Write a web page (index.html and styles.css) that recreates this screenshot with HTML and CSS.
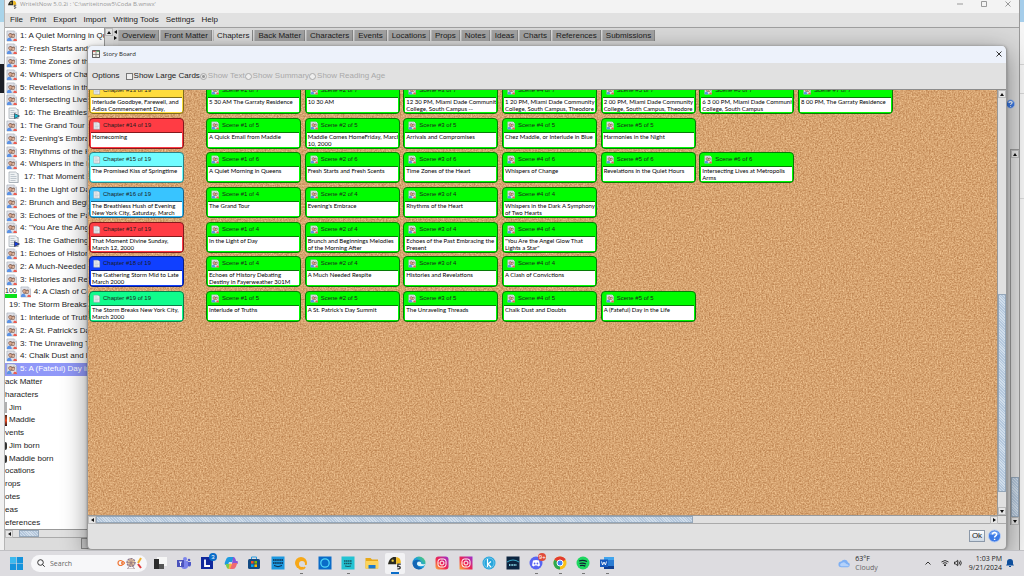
FILE: index.html
```html
<!DOCTYPE html>
<html lang="en">
<head>
<meta charset="utf-8">
<title>WriteItNow - Story Board</title>
<link rel="stylesheet" href="styles.css">
</head>
<body>
<svg class="defs" aria-hidden="true">
  <defs>
    <filter id="cork" x="0" y="0" width="100%" height="100%" color-interpolation-filters="sRGB">
      <feTurbulence type="fractalNoise" baseFrequency="0.65" numOctaves="2" seed="4"/>
      <feColorMatrix values="0.32 0 0 0 0.68  0.40 0 0 0 0.44  0.40 0 0 0 0.24  0 0 0 0 1"/>
    </filter>
    <linearGradient id="ig" x1="0" y1="1" x2="1" y2="0"><stop offset="0" stop-color="#fdb03c"/><stop offset=".45" stop-color="#f0264f"/><stop offset="1" stop-color="#9b2fd0"/></linearGradient>
    <linearGradient id="edge" x1="0" y1="1" x2="1" y2="0"><stop offset="0" stop-color="#0c59a4"/><stop offset=".5" stop-color="#1b9de2"/><stop offset="1" stop-color="#5bd65b"/></linearGradient>
    <symbol id="people" viewBox="0 0 12 12"><path d="M1 .5h8l2.500 2.500v8.500H1z" fill="#dfe1e8" stroke="#9aa2ae" stroke-width=".6"/><path d="M9 .5V3h2.500" fill="#fff" stroke="#9aa2ae" stroke-width=".5"/><path d="M2.500 5.500a2.300 2.300 0 0 1 4.200-1.700A2 2 0 0 1 10 5.500L9 8H4z" fill="#8a6a5c"/><circle cx="4.700" cy="5.400" r="1.500" fill="#d8a890"/><circle cx="8" cy="5.900" r="1.300" fill="#e0b8a0"/><path d="M1 11.500C1 9 2 8 3.500 8s2.700 1 2.700 3.500z" fill="#5a92e6"/><path d="M8 11.500C8 9.500 8.600 9 9.800 9s2.200.8 2.200 2.500z" fill="#ec5c50"/></symbol>
    <symbol id="page" viewBox="0 0 12 12"><path d="M2 2h8.500v10H2z" fill="#8e969e" opacity=".6"/><path d="M1 1h6.500l2.500 2v8.500H1z" fill="#eef1f3" stroke="#8d98a2" stroke-width=".6"/><path d="M2.500 3.500h4M2.500 5.500h6M2.500 7.500h6M2.500 9.500h5" stroke="#aab4bd" stroke-width=".7"/></symbol>
    <symbol id="flag" viewBox="0 0 6 6"><path d="M.5.5 5.500 3 .5 5.500z" stroke="#223" stroke-width=".6"/></symbol>
    <symbol id="help" viewBox="0 0 14 14"><circle cx="7" cy="7" r="6.500" fill="#3c7ae6" stroke="#b9cdf2"/><path d="M2 5.500a5.300 5.300 0 0 1 10 0z" fill="#86b0f6"/><path d="M4.800 5.400c.1-3 4.600-2.800 4.500-.1 0 1.500-2.200 1.600-2.200 3.200M7.100 10v1.300" fill="none" stroke="#fff" stroke-width="1.600"/></symbol>
    <symbol id="bird" viewBox="0 0 12 12"><path d="M0 7C1 2 4 0 7 1v6z" fill="#2a2a20"/><path d="M7 1c3 0 4 2 4 5L7 7z" fill="#f0b91c"/><circle cx="4" cy="4" r="1" fill="#f0d040"/><path d="M11 7H8.500l-.2 2c3-.6 3 2.500-.3 2" fill="none" stroke="#333" stroke-width="1.100"/></symbol>
  </defs>
</svg>
<div class="desktop">
 <div class="workspace">
  <div class="strip strip-left"></div>
  <div class="strip strip-right"></div>

  <main class="app">
    <header class="app-title">
      <svg class="app-logo"><use href="#bird"/></svg>
      <span>WriteItNow 5.0.2i : 'C:\writeitnow5\Coda B.wnwx'</span>
      <span class="win-buttons">
        <button aria-label="Minimize"><svg viewBox="0 0 6 6"><path d="M0 3h6"/></svg></button>
        <button aria-label="Maximize"><svg viewBox="0 0 6 6"><path d="M.5.5h5v5h-5z"/></svg></button>
        <button aria-label="Close"><svg viewBox="0 0 6 6"><path d="M.5.5l5 5m0-5l-5 5"/></svg></button>
      </span>
    </header>
    <nav class="menu"><button>File</button><button>Print</button><button>Export</button><button>Import</button><button>Writing Tools</button><button>Settings</button><button>Help</button></nav>
    <div class="app-body">
      <section class="sidebar">
        <div class="tree-row">
          <ul class="tree">
            <li class="scene"><svg><use href="#people"/></svg>1: A Quiet Morning in Queens</li>
            <li class="scene"><svg><use href="#people"/></svg>2: Fresh Starts and Fresh Scents</li>
            <li class="scene"><svg><use href="#people"/></svg>3: Time Zones of the Heart</li>
            <li class="scene"><svg><use href="#people"/></svg>4: Whispers of Change</li>
            <li class="scene"><svg><use href="#people"/></svg>5: Revelations in the Quiet</li>
            <li class="scene"><svg><use href="#people"/></svg>6: Intersecting Lives at</li>
            <li class="chapter"><i class="pct"></i><svg><use href="#page"/><use class="cyan" href="#flag" x="6" y="6" width="6" height="6"/></svg>16: The Breathless Hush</li>
            <li class="scene"><svg><use href="#people"/></svg>1: The Grand Tour</li>
            <li class="scene"><svg><use href="#people"/></svg>2: Evening's Embrace</li>
            <li class="scene"><svg><use href="#people"/></svg>3: Rhythms of the Heart</li>
            <li class="scene"><svg><use href="#people"/></svg>4: Whispers in the Dark</li>
            <li class="chapter"><i class="pct"></i><svg><use href="#page"/></svg>17: That Moment Divine</li>
            <li class="scene"><svg><use href="#people"/></svg>1: In the Light of Day</li>
            <li class="scene"><svg><use href="#people"/></svg>2: Brunch and Beginnings</li>
            <li class="scene"><svg><use href="#people"/></svg>3: Echoes of the Past</li>
            <li class="scene"><svg><use href="#people"/></svg>4: "You Are the Angel</li>
            <li class="chapter"><i class="pct"></i><svg><use href="#page"/><use class="blue" href="#flag" x="6" y="6" width="6" height="6"/></svg>18: The Gathering Storm</li>
            <li class="scene"><svg><use href="#people"/></svg>1: Echoes of History</li>
            <li class="scene"><svg><use href="#people"/></svg>2: A Much-Needed Respite</li>
            <li class="scene"><svg><use href="#people"/></svg>3: Histories and Revelations</li>
            <li class="rated"><span class="score">100</span><svg><use href="#people"/></svg>4: A Clash of Convictions</li>
            <li class="root"><i class="dot"></i>19: The Storm Breaks: New</li>
            <li class="scene"><svg><use href="#people"/></svg>1: Interlude of Truths</li>
            <li class="scene"><svg><use href="#people"/></svg>2: A St. Patrick's Day</li>
            <li class="scene"><svg><use href="#people"/></svg>3: The Unraveling Threads</li>
            <li class="scene"><svg><use href="#people"/></svg>4: Chalk Dust and Doubts</li>
            <li class="scene selected"><svg><use href="#people"/></svg>5: A (Fateful) Day in the Life</li>
            <li>ack Matter</li>
            <li>haracters</li>
            <li class="leaf"><i class="thumb-grey"></i>Jim</li>
            <li class="leaf"><i class="thumb-red"></i>Maddie</li>
            <li>vents</li>
            <li class="leaf"><i class="clock"></i>Jim born</li>
            <li class="leaf"><i class="clock"></i>Maddie born</li>
            <li>ocations</li>
            <li>rops</li>
            <li>otes</li>
            <li>eas</li>
            <li>eferences</li>
          </ul>
          <div class="vbar"><button class="arrow up" aria-label="Scroll tree up"></button></div>
        </div>
        <div class="hbar tree-hbar"><button class="arrow left" aria-label="Scroll tree left"></button><span class="thumb"></span></div>
        <div class="side-foot"><button aria-label="Search tree"></button></div>
      </section>
      <div class="divider"><i class="arrow left"></i><i class="arrow right"></i></div>
      <section class="content">
        <nav class="tabs"><button>Overview</button><button>Front Matter</button><button class="on">Chapters</button><button>Back Matter</button><button>Characters</button><button>Events</button><button>Locations</button><button>Props</button><button>Notes</button><button>Ideas</button><button>Charts</button><button>References</button><button>Submissions</button></nav>
        <button class="side-help" aria-label="Help"><svg><use href="#help"/></svg></button>
        <div class="vbar content-vbar"><button class="arrow up" aria-label="Scroll up"></button><span class="track"></span><span class="thumb"></span><button class="arrow down" aria-label="Scroll down"></button></div>
      </section>
    </div>
  </main>

  <section class="dialog" role="dialog" aria-label="Story Board">
    <header class="dialog-title">
      <svg viewBox="0 0 9 9"><path d="M.5.5h8v8h-8z" fill="#f4f4ec" stroke="#444"/><path d="M4.500 0v9M0 5h9" stroke="#666" stroke-width=".8"/><path d="M1 1.500h3" stroke="#d04040"/><path d="M5 1.500h3" stroke="#40a050"/></svg>
      <span>Story Board</span>
      <button class="close" aria-label="Close story board"><svg viewBox="0 0 6 6"><path d="M.5.5l5 5m0-5l-5 5"/></svg></button>
    </header>
    <div class="options">
      <span class="options-label">Options</span>
      <label><input type="checkbox">Show Large Cards</label>
      <label class="off"><input type="radio" name="show" checked disabled>Show Text</label>
      <label class="off"><input type="radio" name="show" disabled>Show Summary</label>
      <label class="off"><input type="radio" name="show" disabled>Show Reading Age</label>
    </div>
    <div class="board-row">
      <div class="board">
        <svg class="cork" aria-hidden="true"><rect width="100%" height="100%" filter="url(#cork)"/></svg>
        <div class="cards">
          <div class="row">
            <article class="card main yellow"><h3><svg><use href="#page"/></svg>Chapter #13 of 19</h3><p>Interlude Goodbye, Farewell, and<br>Adios Commencement Day,</p></article>
            <div class="scenes">
              <article class="card"><h3><svg><use href="#people"/></svg>Scene #1 of 7</h3><p>5 30 AM The Garraty Residence</p></article>
              <article class="card"><h3><svg><use href="#people"/></svg>Scene #2 of 7</h3><p>10 30 AM</p></article>
              <article class="card"><h3><svg><use href="#people"/></svg>Scene #3 of 7</h3><p>12 30 PM, Miami Dade Community<br>College, South Campus --</p></article>
              <article class="card"><h3><svg><use href="#people"/></svg>Scene #4 of 7</h3><p>1 20 PM, Miami Dade Community<br>College, South Campus, Theodore</p></article>
              <article class="card"><h3><svg><use href="#people"/></svg>Scene #5 of 7</h3><p>2 00 PM, Miami Dade Community<br>College, South Campus, Theodore</p></article>
              <article class="card"><h3><svg><use href="#people"/></svg>Scene #6 of 7</h3><p>6 3 00 PM, Miami Dade Community<br>College, South Campus</p></article>
              <article class="card"><h3><svg><use href="#people"/></svg>Scene #7 of 7</h3><p>8 00 PM, The Garraty Residence</p></article>
            </div>
          </div>
          <div class="row">
            <article class="card main red"><h3><svg><use href="#page"/></svg>Chapter #14 of 19</h3><p>Homecoming</p></article>
            <div class="scenes">
              <article class="card"><h3><svg><use href="#people"/></svg>Scene #1 of 5</h3><p>A Quick Email from Maddie</p></article>
              <article class="card"><h3><svg><use href="#people"/></svg>Scene #2 of 5</h3><p>Maddie Comes HomeFriday, March<br>10, 2000</p></article>
              <article class="card"><h3><svg><use href="#people"/></svg>Scene #3 of 5</h3><p>Arrivals and Compromises</p></article>
              <article class="card"><h3><svg><use href="#people"/></svg>Scene #4 of 5</h3><p>Chez Maddie, or Interlude in Blue</p></article>
              <article class="card"><h3><svg><use href="#people"/></svg>Scene #5 of 5</h3><p>Harmonies in the Night</p></article>
            </div>
          </div>
          <div class="row">
            <article class="card main cyan"><h3><svg><use href="#page"/></svg>Chapter #15 of 19</h3><p>The Promised Kiss of Springtime</p></article>
            <div class="scenes">
              <article class="card"><h3><svg><use href="#people"/></svg>Scene #1 of 6</h3><p>A Quiet Morning in Queens</p></article>
              <article class="card"><h3><svg><use href="#people"/></svg>Scene #2 of 6</h3><p>Fresh Starts and Fresh Scents</p></article>
              <article class="card"><h3><svg><use href="#people"/></svg>Scene #3 of 6</h3><p>Time Zones of the Heart</p></article>
              <article class="card"><h3><svg><use href="#people"/></svg>Scene #4 of 6</h3><p>Whispers of Change</p></article>
              <article class="card"><h3><svg><use href="#people"/></svg>Scene #5 of 6</h3><p>Revelations in the Quiet Hours</p></article>
              <article class="card"><h3><svg><use href="#people"/></svg>Scene #6 of 6</h3><p>Intersecting Lives at Metropolis<br>Arms</p></article>
            </div>
          </div>
          <div class="row">
            <article class="card main sky"><h3><svg><use href="#page"/></svg>Chapter #16 of 19</h3><p>The Breathless Hush of Evening<br>New York City, Saturday, March</p></article>
            <div class="scenes">
              <article class="card"><h3><svg><use href="#people"/></svg>Scene #1 of 4</h3><p>The Grand Tour</p></article>
              <article class="card"><h3><svg><use href="#people"/></svg>Scene #2 of 4</h3><p>Evening's Embrace</p></article>
              <article class="card"><h3><svg><use href="#people"/></svg>Scene #3 of 4</h3><p>Rhythms of the Heart</p></article>
              <article class="card"><h3><svg><use href="#people"/></svg>Scene #4 of 4</h3><p>Whispers in the Dark A Symphony<br>of Two Hearts</p></article>
            </div>
          </div>
          <div class="row">
            <article class="card main red"><h3><svg><use href="#page"/></svg>Chapter #17 of 19</h3><p>That Moment Divine Sunday,<br>March 12, 2000</p></article>
            <div class="scenes">
              <article class="card"><h3><svg><use href="#people"/></svg>Scene #1 of 4</h3><p>In the Light of Day</p></article>
              <article class="card"><h3><svg><use href="#people"/></svg>Scene #2 of 4</h3><p>Brunch and Beginnings Melodies<br>of the Morning After</p></article>
              <article class="card"><h3><svg><use href="#people"/></svg>Scene #3 of 4</h3><p>Echoes of the Past Embracing the<br>Present</p></article>
              <article class="card"><h3><svg><use href="#people"/></svg>Scene #4 of 4</h3><p>"You Are the Angel Glow That<br>Lights a Star"</p></article>
            </div>
          </div>
          <div class="row">
            <article class="card main blue"><h3><svg><use href="#page"/></svg>Chapter #18 of 19</h3><p>The Gathering Storm Mid to Late<br>March 2000</p></article>
            <div class="scenes">
              <article class="card"><h3><svg><use href="#people"/></svg>Scene #1 of 4</h3><p>Echoes of History Debating<br>Destiny in Fayerweather 301M</p></article>
              <article class="card"><h3><svg><use href="#people"/></svg>Scene #2 of 4</h3><p>A Much Needed Respite</p></article>
              <article class="card"><h3><svg><use href="#people"/></svg>Scene #3 of 4</h3><p>Histories and Revelations</p></article>
              <article class="card"><h3><svg><use href="#people"/></svg>Scene #4 of 4</h3><p>A Clash of Convictions</p></article>
            </div>
          </div>
          <div class="row">
            <article class="card main mint"><h3><svg><use href="#page"/></svg>Chapter #19 of 19</h3><p>The Storm Breaks New York City,<br>March 2000</p></article>
            <div class="scenes">
              <article class="card"><h3><svg><use href="#people"/></svg>Scene #1 of 5</h3><p>Interlude of Truths</p></article>
              <article class="card"><h3><svg><use href="#people"/></svg>Scene #2 of 5</h3><p>A St. Patrick's Day Summit</p></article>
              <article class="card"><h3><svg><use href="#people"/></svg>Scene #3 of 5</h3><p>The Unraveling Threads</p></article>
              <article class="card"><h3><svg><use href="#people"/></svg>Scene #4 of 5</h3><p>Chalk Dust and Doubts</p></article>
              <article class="card"><h3><svg><use href="#people"/></svg>Scene #5 of 5</h3><p>A (Fateful) Day in the Life</p></article>
            </div>
          </div>
        </div>
      </div>
      <div class="vbar board-vbar"><button class="arrow up" aria-label="Scroll board up"></button><span class="track"></span><span class="thumb"></span><span class="track-end"></span><button class="arrow down" aria-label="Scroll board down"></button></div>
    </div>
    <div class="hbar board-hbar"><button class="arrow left" aria-label="Scroll board left"></button><span class="thumb"></span><span class="track"></span><button class="arrow right" aria-label="Scroll board right"></button></div>
    <footer class="dialog-foot"><button class="ok">Ok</button><button class="help" aria-label="Help"><svg><use href="#help"/></svg></button></footer>
  </section>
 </div>

 <footer class="taskbar">
  <button class="start" aria-label="Start"><svg viewBox="0 0 14 14"><path d="M0 0h6.600v6.600H0zM7.400 0H14v6.600H7.400zM0 7.400h6.600V14H0zM7.400 7.400H14V14H7.400z" fill="#1593dc"/><path d="M0 0h6.600v6.600H0z" fill="#3cb9ee"/></svg></button>
  <label class="search"><svg class="lens" viewBox="0 0 8 8"><circle cx="3.500" cy="3.500" r="2.800"/><path d="M5.500 5.500 7.700 7.700"/></svg><input type="text" placeholder="Search" aria-label="Search"><svg class="fair" viewBox="0 0 26 12"><circle cx="3.500" cy="6" r="2.500" fill="none" stroke="#f07838" stroke-width="1.200"/><circle cx="6" cy="6" r="1.500" fill="none" stroke="#f07838"/><circle cx="14" cy="5.500" r="4" fill="#e7c8a0" stroke="#87789c" stroke-width="1.200" stroke-dasharray="2 1"/><path d="M14 1v9M9.500 5.500h9M11 2.300l6 6.400M17 2.300l-6 6.400M14 6l-3.500 6h7z" stroke="#987a80" stroke-width=".7" fill="none"/><path d="M21 6l3-5" stroke="#f0b030" stroke-width="2"/><path d="M21 7l3 4" stroke="#e03c3c" stroke-width="2"/></svg></label>
  <nav class="apps">
   <button aria-label="Task view"><svg viewBox="0 0 14 14"><path d="M4 1h10v9H4z" fill="#f6f6f6"/><path d="M1 3h5v5h5v5H1z" fill="#2c2c2c"/><path d="M6 8h5v5H6z" fill="#555"/></svg></button>
   <button aria-label="Teams"><svg viewBox="0 0 14 14"><circle cx="8" cy="3" r="2" fill="#7b83eb"/><circle cx="12" cy="4" r="1.300" fill="#5059c9"/><path d="M4 5h7v4a3.500 3.500 0 0 1-7 1z" fill="#7b83eb"/><path d="M11 6h3v3a2 2 0 0 1-3 1z" fill="#5059c9"/><path d="M0 4h7v7H0z" fill="#4b53bc"/><path d="M2 6h3M3.500 6v4" stroke="#fff"/></svg></button>
   <button aria-label="L app"><svg viewBox="0 0 14 14"><path d="M1 1h12v12H1z" fill="#10289c"/><path d="M5 3.500v6.500h5" fill="none" stroke="#fff" stroke-width="1.800"/></svg><b class="badge">3</b></button>
   <button aria-label="Copilot"><svg viewBox="0 0 14 14"><path d="M5 1h5L8 6H5L4 9H2Q0 9 1 6l1.500-3.500Q3 1 5 1z" fill="#1c9be0"/><path d="M9 1q2 0 2.500 2l.5 2h1q1.500 0 .5 3H8z" fill="#8a55d8"/><path d="M1.500 8H6l-1 5Q3 13 2.500 11z" fill="#7ccb4c"/><path d="M9 7h4.300l-1.300 3.500Q11 13 9 13H5l1.500-4z" fill="#f06a74"/><path d="M5.500 7.500 8 8l-2 5H4.500z" fill="#fbb042"/></svg></button>
   <button aria-label="Store"><svg viewBox="0 0 14 14"><path d="M4.500 3V1h5v2" fill="none" stroke="#2b9be0"/><rect x="1" y="3" width="12" height="10" rx="1.500" fill="#134a82"/><path d="M4 5h2.600v2.600H4z" fill="#f25022"/><path d="M7.400 5H10v2.600H7.400z" fill="#7fba00"/><path d="M4 8.400h2.600V11H4z" fill="#00a4ef"/><path d="M7.400 8.400H10V11H7.400z" fill="#ffb900"/></svg></button>
   <button aria-label="Prime Video"><svg viewBox="0 0 14 14"><path d="M.5.5h13v13H.5z" fill="#1c98e0"/><path d="M2 4h10M2 7h10" stroke="#0b2c4c" stroke-width="1.600" stroke-dasharray="1.600 .5"/><path d="M3 9.500q4 2.500 8 0" stroke="#0b2c4c" fill="none"/></svg></button>
   <button class="run" aria-label="Music"><svg viewBox="0 0 14 14"><circle cx="7" cy="7" r="6" fill="#f7a818"/><circle cx="8" cy="8" r="3" fill="#dcdce0"/><path d="M9 14a4 4 0 0 0 5-5H9z" fill="#dcdce0"/><path d="M5 12q4 2 6-1" stroke="#f7a818" stroke-width="2" fill="none"/></svg></button>
   <button aria-label="Alexa"><svg viewBox="0 0 14 14"><path d="M.5.5h13v13H.5z" fill="#0a6cc8"/><circle cx="7" cy="7" r="4.200" fill="none" stroke="#4fd4f8" stroke-width="1.300"/></svg></button>
   <button class="run" aria-label="Amazon Music"><svg viewBox="0 0 14 14"><path d="M.5.5h13v13H.5z" fill="#23c3d3"/><path d="M3 5h8M3 7.500h8" stroke="#155a66" stroke-width="1.300" stroke-dasharray="1.500 .4"/><path d="M4 10q3 1 6 0" stroke="#155a66" fill="none"/></svg></button>
   <button aria-label="File Explorer"><svg viewBox="0 0 14 14"><path d="M.5 2h5l1.500 1.500h6v9H.5z" fill="#e8a818"/><path d="M.5 5h13v7.500H.5z" fill="#fcd45c"/><path d="M3.500 9h7v3.500h-7z" fill="#1b7ad0"/></svg></button>
   <button class="run current" aria-label="WriteItNow"><svg viewBox="0 0 12 12"><use href="#bird"/></svg></button>
   <button aria-label="Edge"><svg viewBox="0 0 14 14"><circle cx="7" cy="7" r="6.500" fill="url(#edge)"/><path d="M5 8c0-3 4-3 4-1 0 1 .5 1.500 4.500 1-1 3-8.500 3-8.500 0z" fill="#dff3fa"/><path d="M.7 7C2 3 8 3 9 6c-3-2-5 0-4 3 .5 2 3 3 5 3-4 3-9.500 0-9.300-5z" fill="#1465b4"/></svg></button>
   <button aria-label="Instagram"><svg viewBox="0 0 14 14"><rect x=".5" y=".5" width="13" height="13" rx="3" fill="url(#ig)"/><rect x="3" y="3" width="8" height="8" rx="2.400" fill="none" stroke="#fff"/><circle cx="7" cy="7" r="2" fill="none" stroke="#fff"/></svg></button>
   <button aria-label="Instagram profile"><svg viewBox="0 0 14 14"><path d="M.5.5h13v13H.5z" fill="url(#ig)"/><rect x="3" y="3" width="8" height="8" rx="2.400" fill="none" stroke="#fff"/><circle cx="7" cy="7" r="2" fill="none" stroke="#fff"/></svg></button>
   <button aria-label="Kindle"><svg viewBox="0 0 14 14"><circle cx="7" cy="7" r="6.500" fill="#27a5dc"/><circle cx="7" cy="7" r="5" fill="none" stroke="#9fdcf4" stroke-width=".6"/><path d="M5.500 3v8M9 5.500 6 8l3 3" fill="none" stroke="#fff" stroke-width="1.200"/></svg></button>
   <button aria-label="Disney Plus"><svg viewBox="0 0 14 14"><path d="M.5.5h13v13H.5z" fill="#0c2440"/><path d="M1 6q6-4 12 0" stroke="#3aa9c8" fill="none"/><path d="M3 9h8" stroke="#7fc8d8" stroke-width="2" stroke-dasharray="1 .6"/></svg></button>
   <button class="run" aria-label="Discord"><svg viewBox="0 0 14 14"><circle cx="7" cy="7" r="6.500" fill="#5865f2"/><path d="M3 9.500 4 4.500q3-1 6 0l1 5-1.800 1-1-1H5.800l-1 1z" fill="#fff"/><circle cx="5.600" cy="7.500" r=".9" fill="#5865f2"/><circle cx="8.400" cy="7.500" r=".9" fill="#5865f2"/></svg><b class="badge red-badge">9+</b></button>
   <button class="run" aria-label="Chrome"><svg viewBox="0 0 14 14"><circle cx="7" cy="7" r="6.500" fill="#fbc116"/><path d="M7 7 1.400 3.700A6.500 6.500 0 0 1 12.600 3.700z" fill="#e33b2e"/><path d="M7 7 1.400 3.700A6.500 6.500 0 0 0 7 13.500z" fill="#2da94f"/><circle cx="7" cy="7" r="3" fill="#4285f4" stroke="#fff"/></svg></button>
   <button class="run" aria-label="Spotify"><svg viewBox="0 0 14 14"><circle cx="7" cy="7" r="6.500" fill="#1ed760"/><path d="M3 5q4-1.500 8 .5M3.500 7.500q3.500-1 6.500.5M4 9.700q3-.8 5.300.4" fill="none" stroke="#123" stroke-width="1.200"/></svg></button>
   <button class="run" aria-label="Word"><svg viewBox="0 0 14 14"><path d="M4 1h10v12H4z" fill="#2b7cd3"/><path d="M4 1h10v3H4z" fill="#41a5ee"/><path d="M4 10h10v3H4z" fill="#103f91"/><path d="M0 3.500h8v7.500H0z" fill="#185abd"/><path d="M1.500 5.500 2.600 9 4 6l1.400 3 1.100-3.500" fill="none" stroke="#fff" stroke-width=".9"/></svg></button>
  </nav>
  <div class="tray">
   <div class="weather"><svg viewBox="0 0 14 10"><path d="M3.500 9.500a3 3 0 0 1 0-6 4 4 0 0 1 7.300 1 2.600 2.600 0 0 1 0 5z" fill="#7fb0f4"/><path d="M3 8.500a2 2 0 0 1 1-3.500q3-2 5 1 2 0 3 2.500z" fill="#b4d2fb"/></svg><p><span>63°F</span><span class="soft">Cloudy</span></p></div>
   <button aria-label="Hidden icons"><svg viewBox="0 0 8 8"><path d="M1.500 5.500 4 3l2.500 2.500"/></svg></button>
   <button class="net" aria-label="Network and sound"><svg viewBox="0 0 8 8"><path d="M.5 3Q4 0 7.500 3M1.800 4.500Q4 2.800 6.200 4.500M3 6q1-.8 2 0L4 7z"/></svg><svg viewBox="0 0 8 8"><path d="M.5 3h1.300L3.700 1.200v5.600L1.800 5H.5zM5 2.500q1 1.500 0 3M6.300 1.500q2 2.500 0 5"/></svg></button>
   <p class="clock-text"><span>1:03 PM</span><span>9/21/2024</span></p>
   <svg class="bell" viewBox="0 0 8 8"><path d="M0 6.500 1 5V3a3 3 0 0 1 6 0v2l1 1.500zM3 7h2v1H3z" fill="#0f4f9c"/></svg>
  </div>
 </footer>
</div>
</body>
</html>
```
FILE: styles.css
```css
* { box-sizing: border-box; }
body { margin: 0; font-family: "Liberation Sans", Arial, sans-serif; font-size: 8px; line-height: 10px; color: #1c1c1c; }
button { font: inherit; color: inherit; border: 0; padding: 0; margin: 0; background: none; display: block; }
ul, p, h3 { margin: 0; padding: 0; list-style: none; font-weight: 400; }
svg { display: block; flex: none; }
input { margin: 0; }
.defs { position: absolute; width: 0; height: 0; }

.desktop { height: 100vh; display: flex; flex-direction: column; overflow: hidden; background: #f1f1f2; }
.workspace { flex: 1; position: relative; min-height: 0; overflow: hidden; }
.strip { position: absolute; top: 0; bottom: 0; }
.strip-left { left: 0; width: 4px; background: linear-gradient(#a8d4ea 0 22px, #e8eef2 22px 64px, #1c1f26 64px 93px, #f1f1f1 93px); }
.strip-right { right: 0; width: 5px; background: linear-gradient(#a5cdea 0 22px, #f5f5f5 22px 64px, #d5d5d5 64px 65px, #f5f5f5 65px 93px, #d5d5d5 93px 94px, #f5f5f5 94px 198px, #d9d9d9 198px 199px, #f5f5f5 199px); }

.app { position: absolute; inset: 0 4px 0 4px; display: flex; flex-direction: column; background: #d9d9d9; border-right: 1px solid #999; border-left: 1px solid #b5b5b5; overflow: hidden; }
.app-title { height: 13px; padding: 0 8px 5px 3px; display: flex; align-items: center; gap: 3px; background: #f3f3f3; color: #999; flex: none; }
.app-title > span:first-of-type { font-family: "Open Sans", sans-serif; font-size: 6px; }
.app-logo { width: 9px; height: 9px; }
.win-buttons { margin-left: auto; display: flex; gap: 18px; }
.win-buttons svg, .close svg { width: 6px; height: 6px; fill: none; stroke: #999; stroke-width: 1; }
.menu { display: flex; gap: 7px; padding: 0 5px; height: 15px; align-items: center; background: #e1e1e1; border-bottom: 1px solid #a0a0a0; flex: none; }
.app-body { flex: 1; min-height: 0; display: flex; }
.sidebar { width: 108px; display: flex; flex-direction: column; }
.tree-row { flex: 1; min-height: 0; display: flex; background: #fff; }
.tree { flex: 1; min-width: 0; display: flex; flex-direction: column; padding-top: 2px; overflow: hidden; }
.tree li { flex: 1; display: flex; align-items: center; white-space: nowrap; overflow: hidden; }
.tree svg { width: 11px; height: 12px; }
.scene { padding-left: 1px; gap: 3px; }
.chapter { gap: 4px; }
.chapter svg { width: 12px; }
.pct { width: 2px; height: 10px; margin-right: -1px; background: repeating-linear-gradient(#8a8ae8 0 2px, #fff 2px 4px); }
.tree .cyan { fill: #17bfd8; }
.tree .blue { fill: #1540e0; }
.rated { gap: 3px; }
.score { width: 12px; font-size: 7px; line-height: 7px; border-bottom: 4px solid #0ce01c; }
.root { gap: 4px; }
.dot { width: 1px; height: 4px; background: #d8b020; }
.leaf { gap: 2px; }
.thumb-grey, .thumb-red, .clock { width: 2px; height: 11px; background: #b0b0b0; }
.thumb-red { background: linear-gradient(#502818, #e84820, #301818); }
.clock { height: 8px; background: #333; border-radius: 0 2px 2px 0; }
.selected { background: #9098f8; color: #fff; }

.vbar { width: 9px; display: flex; flex-direction: column; background: #e0e0e0; border-left: 1px solid #999; flex: none; }
.hbar { height: 9px; display: flex; background: #e0e0e0; border-top: 1px solid #999; border-bottom: 1px solid #aaa; flex: none; }
.arrow { width: 8px; height: 8px; background: #e6e6e6; border: 1px solid #bbb; display: grid; place-items: center; flex: none; }
.arrow::before { content: ""; border: 2px solid transparent; }
.arrow.up::before { border-bottom: 3px solid #111; border-top: 0; }
.arrow.down::before { border-top: 3px solid #111; border-bottom: 0; }
.arrow.left::before { border-right: 3px solid #111; border-left: 0; }
.arrow.right::before { border-left: 3px solid #111; border-right: 0; }
.thumb { background: repeating-linear-gradient(45deg, #b4c7dc 0 1px, #d0ddea 1px 2px); border: 1px solid #94a6b8; }
.tree-hbar .thumb { width: 20px; margin-left: 6px; }
.side-foot { height: 12px; background: #dcdcdc; padding-left: 76px; }
.side-foot button { width: 14px; height: 11px; border: 1px solid #888; background: #c8c8c8; }
.divider { width: 5px; padding-top: 1px; background: #ddd; }
.divider .arrow { width: 4px; height: 6px; border: 0; background: none; }
.content { flex: 1; min-width: 0; display: flex; flex-direction: column; align-items: flex-end; }
.tabs { align-self: stretch; display: flex; gap: 1px; padding-top: 2px; height: 13px; flex: none; }
.tabs button { padding: 0 3px; background: #a2a2a2; border-right: 1px solid #888; border-left: 1px solid #bbb; white-space: nowrap; }
.tabs .on { background: #dcdcdc; }
.side-help { margin: 58px 4px 0 0; }
.side-help svg { width: 9px; height: 10px; }
.content-vbar { flex: 1; margin: 40px 0 25px; border-top: 1px solid #999; }
.track { flex: 1; }
.content-vbar .thumb { height: 40px; }

.dialog { position: absolute; inset: 46px 17px 0 87px; display: flex; flex-direction: column; background: #e1e1e1; border: 1px solid #9a9a9a; border-top: 0; border-radius: 5px; overflow: hidden; box-shadow: 0 6px 26px rgba(0, 0, 0, .42), 0 0 3px rgba(0, 0, 0, .3); }
.dialog-title { height: 17px; padding: 0 4px 1px; display: flex; align-items: center; gap: 3px; background: #edf2fb; font-family: "Open Sans", sans-serif; font-size: 6px; flex: none; }
.dialog-title > svg { width: 8px; height: 8px; }
.close { margin-left: auto; }
.close svg { stroke: #333; }
.options { display: flex; height: 27px; align-items: center; padding: 0 4px; border-bottom: 1px solid #8c8c8c; flex: none; }
.options-label { margin-right: 6px; }
.options label { display: flex; align-items: center; gap: 1px; }
.options input { appearance: none; width: 7px; height: 7px; border: 1px solid #777; background: #eee; }
.options input[type="radio"] { border-radius: 50%; border-color: #aaa; }
.options input:checked { background: radial-gradient(#999 0 1px, #e6e6e6 2px); }
.off { color: #a9a9a9; }
.board-row { flex: 1; min-height: 0; display: flex; }
.board { flex: 1; min-width: 0; position: relative; overflow: hidden; background: #d8a26c; }
.cork { position: absolute; inset: 0; width: 100%; height: 100%; }
.cards { position: relative; height: 239px; margin: -7px 0 0 1px; display: flex; flex-direction: column; justify-content: space-between; }
.row { display: flex; gap: 22px; }
.scenes { width: 687px; display: grid; grid-template-columns: repeat(7, 95px); justify-content: space-between; }
.card { --c: #00fc00; --edge: #067a06; width: 95px; height: 31px; padding: 0 1px 1px; display: flex; flex-direction: column; background: var(--c); border: 1px solid var(--edge); border-radius: 4px; font-size: 6px; line-height: 7px; }
.card h3 { height: 14px; display: flex; align-items: center; gap: 3px; padding-left: 3px; font-size: 6px; border-bottom: 1px solid var(--edge); }
.card.main h3 { gap: 2px; padding-left: 2px; }
.card h3 svg { width: 8px; height: 9px; }
.card p { flex: 1; padding-left: 1px; background: #fff; color: #000; font-family: Lato, "Liberation Sans", sans-serif; white-space: nowrap; overflow: hidden; }
.yellow { --c: #ffdc3c; --edge: #7e6c1c; }
.red { --c: #ff3c44; --edge: #84181c; }
.card.cyan { --c: #70fcff; --edge: #2c8084; }
.sky { --c: #38c4ff; --edge: #1c6084; }
.card.blue { --c: #1040ff; --edge: #081c84; }
.mint { --c: #10fc8c; --edge: #0a7c48; }
.board-vbar .thumb { height: 198px; }
.track-end { height: 15px; }
.board-hbar .thumb { width: 597px; }
.board-hbar .arrow.right { margin-right: 8px; }
.dialog-foot { height: 25px; padding: 0 5px 2px; display: flex; justify-content: flex-end; align-items: center; gap: 3px; flex: none; }
.ok { width: 16px; height: 12px; border: 1px solid #8b98a8; background: linear-gradient(#fff, #ccd8e4); }
.help svg { width: 13px; height: 14px; }

.taskbar { height: 26px; flex: none; display: flex; align-items: center; padding: 0 10px 1px; background: #dddce0; border-top: 1px solid #c0c0c4; }
.start svg { width: 13px; height: 13px; }
.search { width: 116px; height: 17px; margin: 0 3px 0 8px; padding: 0 4px 0 6px; display: flex; align-items: center; gap: 5px; border-radius: 9px; background: #f7f7f9; }
.search input { flex: 1; min-width: 0; width: 40px; border: 0; padding: 0; background: none; font-family: "Open Sans", sans-serif; font-size: 7px; color: #555; }
.search input::placeholder { color: #666; }
.lens { width: 8px; height: 8px; fill: none; stroke: #333; }
.fair { width: 26px; height: 12px; }
.apps { width: 467px; display: flex; justify-content: space-between; }
.apps button { width: 20px; height: 21px; display: grid; place-items: center; position: relative; border-radius: 2px; }
.apps svg { width: 14px; height: 14px; }
.badge { position: absolute; top: 0; right: 0; width: 8px; height: 8px; border-radius: 4px; background: #0a6cc8; color: #fff; font-size: 6px; line-height: 8px; font-weight: 400; text-align: center; }
.red-badge { background: #e04c3c; }
.run::after { content: ""; position: absolute; left: 9px; bottom: 0; width: 3px; height: 1px; background: #777; }
.apps .current { background: #f2f2f4; }
.current::after { left: 6px; width: 8px; height: 2px; background: #0a6cc8; }
.tray { margin-left: auto; display: flex; align-items: center; font-family: "Open Sans", sans-serif; font-size: 7px; line-height: 9px; }
.tray span { display: block; }
.soft { color: #666; }
.weather { display: flex; align-items: center; gap: 4px; margin-right: 46px; }
.weather svg { width: 13px; height: 10px; }
.tray button svg { width: 8px; height: 8px; fill: none; stroke: #333; stroke-width: 1; }
.net { display: flex; gap: 5px; margin: 0 7px 0 9px; }
.clock-text { text-align: right; margin-right: 4px; }
.bell { width: 8px; height: 8px; }
```
